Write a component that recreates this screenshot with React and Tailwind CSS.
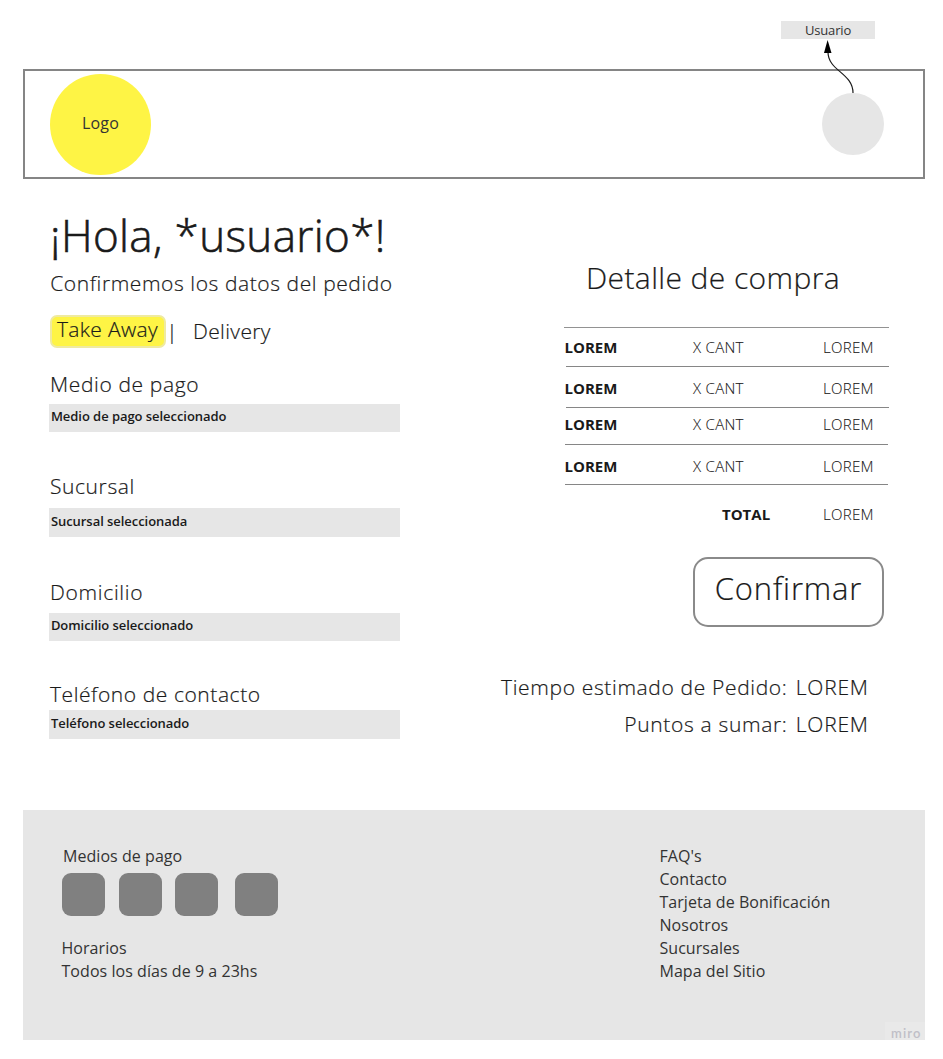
const fields = [
  { title: 'Medio de pago', value: 'Medio de pago seleccionado', block: 'mt-[22px]', tracking: 'tracking-[0.63px]', box: 'mt-[6px] pt-[3px]' },
  { title: 'Sucursal', value: 'Sucursal seleccionada', block: 'mt-[39.6px]', tracking: 'tracking-[0.6px]', box: 'mt-[8.4px] pt-[4px]' },
  { title: 'Domicilio', value: 'Domicilio seleccionado', block: 'mt-[41.2px]', tracking: 'tracking-[0.7px]', box: 'mt-[7px] pt-[3px]' },
  { title: 'Teléfono de contacto', value: 'Teléfono seleccionado', block: 'mt-[38.6px]', tracking: 'tracking-[0.57px]', box: 'mt-[2.3px] pt-[4px]' },
]

const items = [
  { row: 'h-[38px] pt-[9px]', line: 'ml-[2.5px]' },
  { row: 'h-[40px] pt-[11px]', line: 'ml-[2.5px]' },
  { row: 'h-[36px] pt-[6px]', line: 'ml-[1px] mr-[1px]' },
  { row: 'h-[39px] pt-[11px]', line: 'ml-[1px] mr-[1px]' },
]

const links = ["FAQ's", 'Contacto', 'Tarjeta de Bonificación', 'Nosotros', 'Sucursales', 'Mapa del Sitio']

function Header() {
  return (
    <header className="relative">
      <div className="ml-[781px] mt-[21.2px] h-[18px] w-[94px] bg-[#e6e6e6] text-center text-[13px] leading-[18px] tracking-[-0.15px]">Usuario</div>
      <div className="ml-[23px] mt-[29.8px] flex h-[110.4px] w-[902px] items-center justify-between border-2 border-[#858585] pl-[25px] pr-[39px]">
        <div className="flex size-[101px] items-center justify-center rounded-full bg-[#fef445] pb-[2px] text-base leading-[23px] tracking-[0.2px]">Logo</div>
        <div className="size-[62px] rounded-full bg-[#e6e6e6]" />
      </div>
      <svg className="absolute left-[820px] top-[16.8px]" width="40" height="56" viewBox="0 0 40 56" aria-hidden="true">
        <path d="M33 55C33 35 8 33 8 14" fill="none" stroke="#1a1a1a" strokeWidth="1.2" />
        <path d="M7.6 2L11.5 15H4Z" fill="#000" />
      </svg>
    </header>
  )
}

function OrderData() {
  return (
    <section className="w-[350.2px] font-light text-[#1a1a1a] [-webkit-text-stroke:0.2px_#1a1a1a]">
      <h1 className="ml-[0.6px] text-[44px] leading-[60px] tracking-[0.35px] [-webkit-text-stroke:0.6px_#1a1a1a]">¡Hola, *usuario*!</h1>
      <p className="ml-[0.8px] mt-[4px] text-[21px] leading-[28px] tracking-[0.58px]">Confirmemos los datos del pedido</p>
      <div className="mt-[18px] flex h-[33px] text-[21px] leading-[28px]">
        <button className="ml-[0.6px] flex h-[33px] w-[116px] rounded-[7px] border-2 border-[#efeaa0] bg-[#fef445] pl-[5px] leading-[25px] tracking-[0.35px]">Take Away</button>
        <span className="mt-[2px] w-[12px] text-center">|</span>
        <button className="ml-[15px] mt-[2px] h-[28px] tracking-[0.38px]">Delivery</button>
      </div>
      {fields.map((f) => (
        <div key={f.title} className={f.block}>
          <h2 className={`ml-[0.6px] text-[21px] leading-[28px] ${f.tracking}`}>{f.title}</h2>
          <div className={`h-[28.4px] bg-[#e6e6e6] pl-[1.5px] text-[13px] font-semibold leading-[18px] tracking-[-0.05px] [-webkit-text-stroke:0] ${f.box}`}>{f.value}</div>
        </div>
      ))}
    </section>
  )
}

function Purchase() {
  return (
    <section className="w-[389px] pt-[53px] font-light text-[#1a1a1a] [-webkit-text-stroke:0.2px_#1a1a1a]">
      <h2 className="ml-[86px] text-[30px] leading-[40px] tracking-[0.4px]">Detalle de compra</h2>
      <div className="ml-[64px] mt-[29px] w-[325px] text-[15px] leading-[20px] [-webkit-text-stroke:0.1px_#1a1a1a]">
        <div className="h-px bg-[#929292]" />
        {items.map((it, i) => (
          <div key={i}>
            <div className={`grid grid-cols-[128px_130px_1fr] pl-px ${it.row}`}>
              <span className="-ml-[0.5px] font-bold [-webkit-text-stroke:0]">LOREM</span>
              <span className="tracking-[0.3px]">X CANT</span>
              <span className="tracking-[0.3px]">LOREM</span>
            </div>
            <div className={`h-px bg-[#868686] ${it.line}`} />
          </div>
        ))}
        <div className="mt-[19px] flex">
          <span className="ml-[158px] w-[101px] font-bold [-webkit-text-stroke:0]">TOTAL</span>
          <span className="tracking-[0.3px]">LOREM</span>
        </div>
      </div>
      <button className="ml-[193px] mt-[33px] flex h-[70px] w-[191px] justify-center rounded-[15px] border-2 border-[#8a8a8a] pt-[9.4px] text-[31px] leading-[40px] tracking-[0.85px]">Confirmar</button>
      <dl className="mt-[46px] grid grid-cols-[287.5px_1fr] gap-x-[8.3px] gap-y-[9px] text-[21px] leading-[28px]">
        <dt className="text-right tracking-[0.65px]">Tiempo estimado de Pedido:</dt>
        <dd className="tracking-[0.8px]">LOREM</dd>
        <dt className="text-right tracking-[0.66px]">Puntos a sumar:</dt>
        <dd className="tracking-[0.8px]">LOREM</dd>
      </dl>
    </section>
  )
}

function Footer() {
  return (
    <footer className="relative ml-[23px] flex h-[229.9px] w-[902px] bg-[#e6e6e6] text-base leading-[23px]">
      <div className="w-[636.5px] pl-[38.5px] pt-[34.7px]">
        <p className="ml-[1.5px] tracking-[0.05px]">Medios de pago</p>
        <div className="mt-[5px] flex">
          <div className="size-[43px] rounded-[9px] bg-[#808080]" />
          <div className="ml-[14.5px] size-[43px] rounded-[9px] bg-[#808080]" />
          <div className="ml-[13px] size-[43px] rounded-[9px] bg-[#808080]" />
          <div className="ml-[17px] size-[43px] rounded-[9px] bg-[#808080]" />
        </div>
        <p className="mt-[21px] tracking-[0.05px]">Horarios</p>
        <p className="tracking-[0.05px]">Todos los días de 9 a 23hs</p>
      </div>
      <nav className="flex flex-col pt-[34.7px] tracking-[0.04px]">
        {links.map((label) => (
          <a key={label}>{label}</a>
        ))}
      </nav>
      <span className="absolute bottom-0 right-0 h-[18px] w-[40px] bg-[#e9e9e9] pl-[6px] font-[Lato,sans-serif] text-[13px] font-semibold leading-[22px] tracking-[1.1px] text-[#c0bfc7]">miro</span>
    </footer>
  )
}

export default function App() {
  return (
    <div className="flow-root h-[1059px] w-[943px] overflow-hidden whitespace-nowrap bg-white font-['Open_Sans',sans-serif] font-normal text-[#333333]">
      <Header />
      <main className="ml-[49.4px] mt-[25.6px] flex h-[605.3px]">
        <OrderData />
        <div className="w-[100.4px]" />
        <Purchase />
      </main>
      <Footer />
    </div>
  )
}
